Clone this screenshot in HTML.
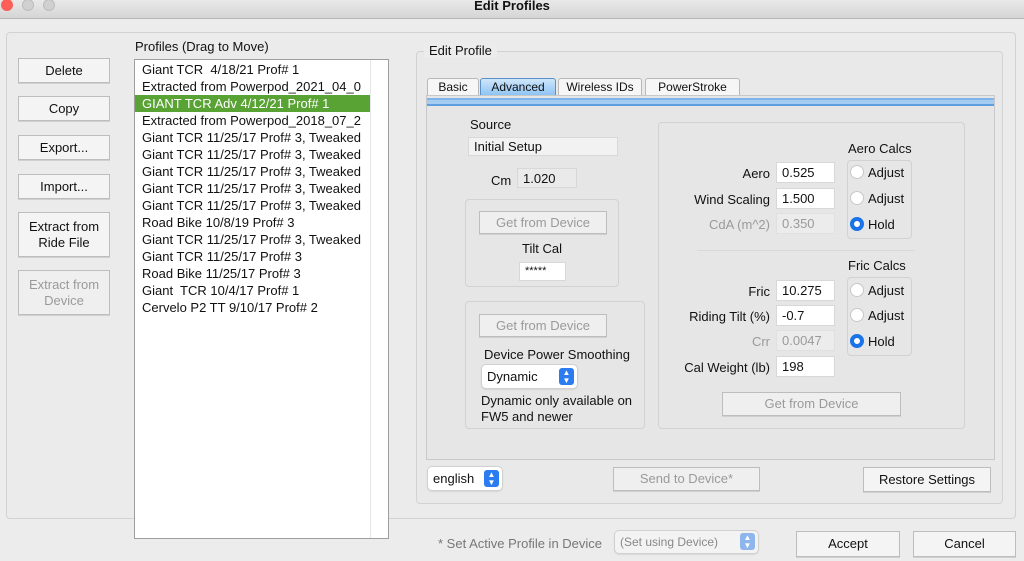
<!DOCTYPE html>
<html><head><style>
*{box-sizing:border-box;margin:0;padding:0}
body{width:1024px;height:561px;background:#ececec;font-family:"Liberation Sans",sans-serif;font-size:13px;color:#111;position:relative;overflow:hidden}
.a{position:absolute;white-space:nowrap}
.btn{position:absolute;background:#f4f4f4;border:1px solid #bdbdbd;display:flex;align-items:center;justify-content:center;text-align:center;line-height:16px;box-shadow:0 1px 0 #d0d0d0;white-space:nowrap}
.dis{color:#9a9a9a;background:#efefef}
.grp{position:absolute;border:1px solid #d2d2d2;border-radius:4px;background:#e6e6e6}
.fld{position:absolute;background:#fff;border:1px solid #d8d8d8;padding-left:5px;line-height:19px}
.fd{background:#ececec;color:#9a9a9a}
.r{position:absolute;width:14px;height:14px;border-radius:50%;background:#fff;border:1px solid #c8c8c8}
.r.on{background:#fff;border:4px solid #1a73e8}
.pop{position:absolute;background:#fff;border-radius:4px;box-shadow:0 0 0 1px #d0d0d0,0 1px 2px #bbb;padding-left:5px;line-height:23px}
.ar{position:absolute;right:3px;top:3px;width:15px;height:17px;background:#2b7cf0;border-radius:3px;color:#fff;font-size:8px;line-height:8px;text-align:center;padding-top:1px}
.tab{position:absolute;top:78px;height:17px;background:#f6f6f6;border:1px solid #b8b8b8;border-bottom:none;border-radius:3px 3px 0 0;text-align:center;line-height:16px;font-size:12px}
.lst div{height:17px;line-height:17px;padding-left:7px}
</style></head><body>
<div class="a" style="left:0;top:0;width:1024px;height:19px;background:linear-gradient(#e9e9e9,#d5d5d5);border-bottom:1px solid #b5b5b5"></div>
<div class="a" style="left:1px;top:-1px;width:12px;height:12px;border-radius:50%;background:#fc5f57"></div>
<div class="a" style="left:22px;top:-1px;width:12px;height:12px;border-radius:50%;background:#d0d0d0;border:1px solid #bcbcbc"></div>
<div class="a" style="left:43px;top:-1px;width:12px;height:12px;border-radius:50%;background:#d0d0d0;border:1px solid #bcbcbc"></div>
<div class="a" style="left:0;width:1024px;top:0;text-align:center;font-weight:bold;line-height:12px;font-size:13px">Edit Profiles</div>

<div class="grp" style="left:6px;top:32px;width:1010px;height:487px;background:#ebebeb"></div>

<div class="btn" style="left:18px;top:58px;width:92px;height:25px">Delete</div>
<div class="btn" style="left:18px;top:96px;width:92px;height:25px">Copy</div>
<div class="btn" style="left:18px;top:135px;width:92px;height:25px">Export...</div>
<div class="btn" style="left:18px;top:174px;width:92px;height:25px">Import...</div>
<div class="btn" style="left:18px;top:212px;width:92px;height:45px;white-space:normal">Extract from<br>Ride File</div>
<div class="btn dis" style="left:18px;top:270px;width:92px;height:45px;white-space:normal">Extract from<br>Device</div>

<div class="a" style="left:135px;top:39px">Profiles (Drag to Move)</div>
<div class="a lst" style="left:134px;top:59px;width:255px;height:480px;background:#fff;border:1px solid #9e9e9e;overflow:hidden;padding-top:1px">
<div style="width:235px;overflow:hidden">Giant TCR&nbsp; 4/18/21 Prof# 1</div>
<div style="width:235px;overflow:hidden">Extracted from Powerpod_2021_04_0</div>
<div style="width:235px;overflow:hidden;background:#59a234;color:#fff">GIANT TCR Adv 4/12/21 Prof# 1</div>
<div style="width:235px;overflow:hidden">Extracted from Powerpod_2018_07_2</div>
<div style="width:235px;overflow:hidden">Giant TCR 11/25/17 Prof# 3, Tweaked</div>
<div style="width:235px;overflow:hidden">Giant TCR 11/25/17 Prof# 3, Tweaked</div>
<div style="width:235px;overflow:hidden">Giant TCR 11/25/17 Prof# 3, Tweaked</div>
<div style="width:235px;overflow:hidden">Giant TCR 11/25/17 Prof# 3, Tweaked</div>
<div style="width:235px;overflow:hidden">Giant TCR 11/25/17 Prof# 3, Tweaked</div>
<div style="width:235px;overflow:hidden">Road Bike 10/8/19 Prof# 3</div>
<div style="width:235px;overflow:hidden">Giant TCR 11/25/17 Prof# 3, Tweaked</div>
<div style="width:235px;overflow:hidden">Giant TCR 11/25/17 Prof# 3</div>
<div style="width:235px;overflow:hidden">Road Bike 11/25/17 Prof# 3</div>
<div style="width:235px;overflow:hidden">Giant&nbsp; TCR 10/4/17 Prof# 1</div>
<div style="width:235px;overflow:hidden">Cervelo P2 TT 9/10/17 Prof# 2</div>
<div class="a" style="left:235px;top:0;width:1px;height:480px;background:#e6e6e6;padding:0"></div>
</div>

<div class="grp" style="left:416px;top:51px;width:587px;height:453px;background:#e9e9e9"></div>
<div class="a" style="left:424px;top:43px;background:#ececec;padding:0 5px">Edit Profile</div>

<div class="tab" style="left:427px;width:52px">Basic</div>
<div class="tab" style="left:480px;width:76px;background:linear-gradient(#cfe6fb,#8fc4f3);border-color:#5a8fc8">Advanced</div>
<div class="tab" style="left:558px;width:84px">Wireless IDs</div>
<div class="tab" style="left:645px;width:95px">PowerStroke</div>
<div class="a" style="left:426px;top:95px;width:569px;height:365px;background:#e6e6e6;border:1px solid #c8c8c8"></div>
<div class="a" style="left:427px;top:98px;width:567px;height:8px;background:#a5cdf2;border-top:2px solid #7fb5ea;border-bottom:2px solid #5f9fe0"></div>

<div class="a" style="left:470px;top:117px">Source</div>
<div class="fld" style="left:468px;top:137px;width:150px;height:19px;background:#f2f2f2;line-height:17px">Initial Setup</div>
<div class="a" style="left:491px;top:173px">Cm</div>
<div class="fld" style="left:517px;top:168px;width:60px;height:20px;background:#eaeaea">1.020</div>

<div class="grp" style="left:465px;top:199px;width:154px;height:88px"></div>
<div class="btn dis" style="left:479px;top:211px;width:128px;height:23px">Get from Device</div>
<div class="a" style="left:465px;width:154px;top:241px;text-align:center">Tilt Cal</div>
<div class="fld" style="left:519px;top:262px;width:47px;height:19px;font-size:11px;line-height:16px">*****</div>

<div class="grp" style="left:465px;top:301px;width:180px;height:128px"></div>
<div class="btn dis" style="left:479px;top:314px;width:128px;height:23px">Get from Device</div>
<div class="a" style="left:484px;top:347px">Device Power Smoothing</div>
<div class="pop" style="left:482px;top:365px;width:95px;height:23px">Dynamic<div class="ar">▲<br>▼</div></div>
<div class="a" style="left:481px;top:393px;line-height:16px">Dynamic only available on<br>FW5 and newer</div>

<div class="grp" style="left:658px;top:122px;width:307px;height:307px"></div>
<div class="a" style="left:848px;top:141px">Aero Calcs</div>
<div class="a" style="right:254px;top:166px">Aero</div>
<div class="a" style="right:254px;top:192px">Wind Scaling</div>
<div class="a" style="right:254px;top:217px;color:#9a9a9a">CdA (m^2)</div>
<div class="fld" style="left:776px;top:162px;width:59px;height:21px">0.525</div>
<div class="fld" style="left:776px;top:188px;width:59px;height:21px">1.500</div>
<div class="fld fd" style="left:776px;top:213px;width:59px;height:21px;border-color:#e0e0e0">0.350</div>
<div class="grp" style="left:847px;top:160px;width:65px;height:79px"></div>
<div class="r" style="left:850px;top:165px"></div><div class="a" style="left:868px;top:165px">Adjust</div>
<div class="r" style="left:850px;top:191px"></div><div class="a" style="left:868px;top:191px">Adjust</div>
<div class="r on" style="left:850px;top:217px"></div><div class="a" style="left:868px;top:217px">Hold</div>
<div class="a" style="left:697px;top:250px;width:218px;height:1px;background:#fafafa;border-top:1px solid #d8d8d8"></div>

<div class="a" style="left:848px;top:258px">Fric Calcs</div>
<div class="a" style="right:254px;top:284px">Fric</div>
<div class="a" style="right:254px;top:309px">Riding Tilt (%)</div>
<div class="a" style="right:254px;top:334px;color:#9a9a9a">Crr</div>
<div class="a" style="right:254px;top:360px">Cal Weight (lb)</div>
<div class="fld" style="left:776px;top:280px;width:59px;height:21px">10.275</div>
<div class="fld" style="left:776px;top:305px;width:59px;height:21px">-0.7</div>
<div class="fld fd" style="left:776px;top:330px;width:59px;height:21px;border-color:#e0e0e0">0.0047</div>
<div class="fld" style="left:776px;top:356px;width:59px;height:21px">198</div>
<div class="grp" style="left:847px;top:277px;width:65px;height:79px"></div>
<div class="r" style="left:850px;top:283px"></div><div class="a" style="left:868px;top:283px">Adjust</div>
<div class="r" style="left:850px;top:308px"></div><div class="a" style="left:868px;top:308px">Adjust</div>
<div class="r on" style="left:850px;top:334px"></div><div class="a" style="left:868px;top:334px">Hold</div>
<div class="btn dis" style="left:722px;top:392px;width:179px;height:24px">Get from Device</div>

<div class="pop" style="left:428px;top:467px;width:74px;height:23px">english<div class="ar">▲<br>▼</div></div>
<div class="btn dis" style="left:613px;top:467px;width:147px;height:24px">Send to Device*</div>
<div class="btn" style="left:863px;top:467px;width:128px;height:25px">Restore Settings</div>

<div class="a" style="left:438px;top:536px;color:#777">* Set Active Profile in Device</div>
<div class="pop" style="left:615px;top:531px;width:143px;height:22px;line-height:22px;color:#888;font-size:12px;background:#f3f3f3">(Set using Device)<div class="ar" style="top:2px;background:#8fb6ec">▲<br>▼</div></div>
<div class="btn" style="left:796px;top:531px;width:104px;height:26px">Accept</div>
<div class="btn" style="left:913px;top:531px;width:103px;height:26px">Cancel</div>
</body></html>
